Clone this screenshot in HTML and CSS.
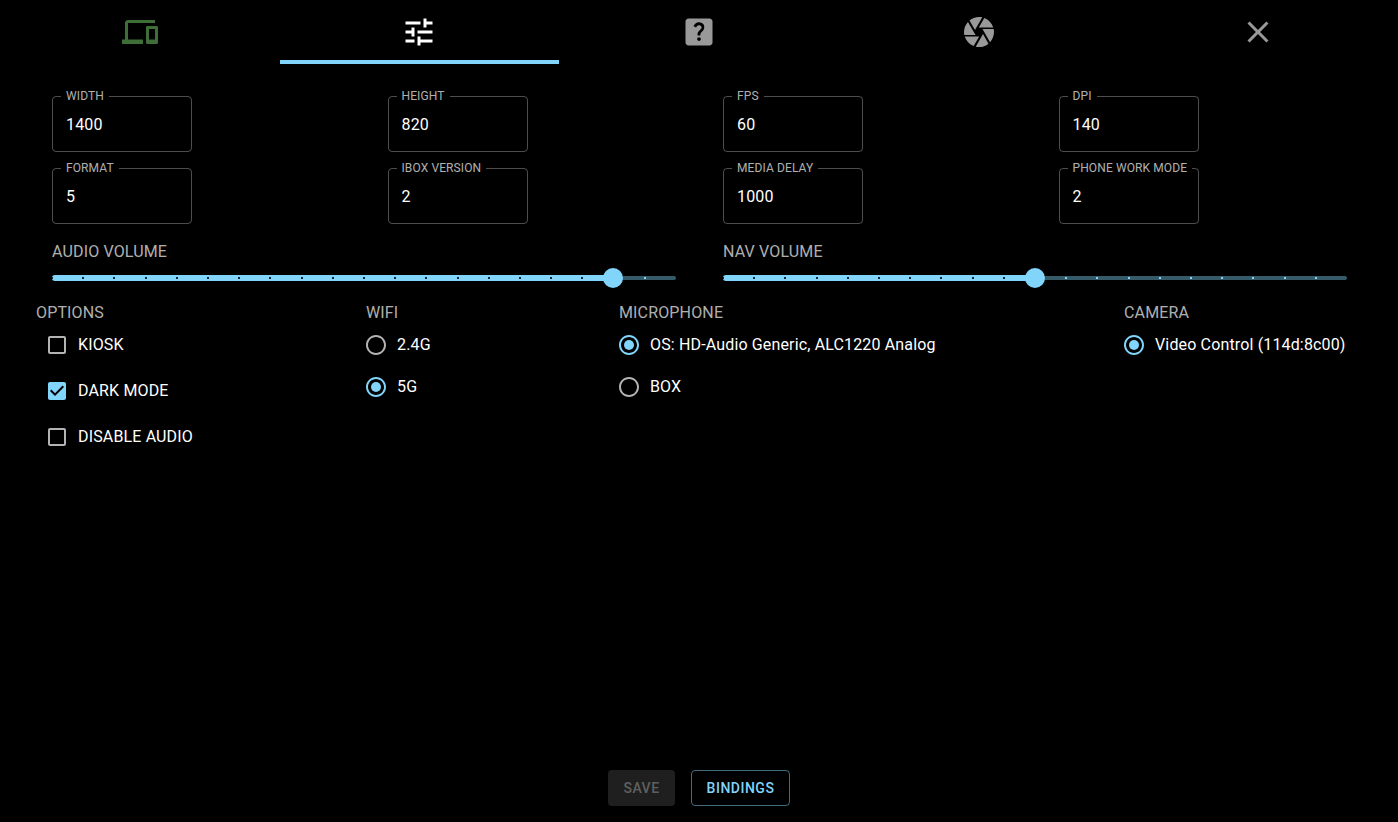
FILE: index.html
```html
<!DOCTYPE html>
<html lang="en">
<head>
    <meta charset="UTF-8">
    <title>Settings</title>
    <link rel="stylesheet" href="styles.css">
</head>
<body>
    <nav class="tabs">
        <div class="tab tab-green"><svg viewBox="0 0 24 24"><path d="M4 6h18V4H4c-1.1 0-2 .9-2 2v11H0v3h14v-3H4V6zm19 2h-6c-.55 0-1 .45-1 1v10c0 .55.45 1 1 1h6c.55 0 1-.45 1-1V9c0-.55-.45-1-1-1zm-1 9h-4v-7h4v7z"/></svg></div>
        <div class="tab tab-active"><svg viewBox="0 0 24 24"><path d="M3 17v2h6v-2H3zM3 5v2h10V5H3zm10 16v-2h8v-2h-8v-2h-2v6h2zM7 9v2H3v2h4v2h2V9H7zm14 4v-2H11v2h10zm-6-4h2V7h4V5h-4V3h-2v6z"/></svg></div>
        <div class="tab"><svg viewBox="0 0 24 24"><path d="M19 3H5c-1.1 0-2 .9-2 2v14c0 1.1.9 2 2 2h14c1.1 0 2-.9 2-2V5c0-1.1-.9-2-2-2zm-6.99 15c-.7 0-1.26-.56-1.26-1.26 0-.71.56-1.25 1.26-1.25.71 0 1.25.54 1.25 1.25-.01.69-.54 1.26-1.25 1.26zm3.01-7.4c-.76 1.11-1.48 1.46-1.89 2.2-.17.3-.23.5-.23 1.47h-1.87c0-.52-.08-1.37.33-2.1.52-.93 1.5-1.48 2.07-2.29.6-.86.26-2.46-1.44-2.46-1.11 0-1.66.84-1.89 1.54l-1.73-.73C8.84 6.82 10.14 5.5 11.99 5.5c1.53 0 2.57.7 3.1 1.57.45.74.71 2.19-.07 3.53z"/></svg></div>
        <div class="tab"><svg viewBox="0 0 24 24"><path d="M9.4 10.5l4.77-8.26C13.47 2.09 12.75 2 12 2c-2.4 0-4.6.85-6.32 2.25l3.66 6.35.06-.1zM21.54 9c-.92-2.92-3.15-5.26-6-6.34L11.88 9h9.66zm.26 1h-7.49l.29.5 4.76 8.25C21 16.97 22 14.61 22 12c0-.69-.07-1.35-.2-2zM8.54 12l-3.9-6.75C3.01 7.03 2 9.39 2 12c0 .69.07 1.35.2 2h7.49l-1.15-2zm-6.08 3c.92 2.92 3.15 5.26 6 6.34L12.12 15H2.46zm11.27 0l-3.9 6.76c.7.15 1.42.24 2.17.24 2.4 0 4.6-.85 6.32-2.25l-3.66-6.35-.93 1.6z"/></svg></div>
        <div class="tab"><svg viewBox="0 0 24 24"><path d="M19 6.41 17.59 5 12 10.59 6.41 5 5 6.41 10.59 12 5 17.59 6.41 19 12 13.41 17.59 19 19 17.59 13.41 12z"/></svg></div>
    </nav>

    <section class="fields">
        <div class="field"><label>WIDTH</label><input value="1400"></div>
        <div class="field"><label>HEIGHT</label><input value="820"></div>
        <div class="field"><label>FPS</label><input value="60"></div>
        <div class="field"><label>DPI</label><input value="140"></div>
        <div class="field"><label>FORMAT</label><input value="5"></div>
        <div class="field"><label>IBOX VERSION</label><input value="2"></div>
        <div class="field"><label>MEDIA DELAY</label><input value="1000"></div>
        <div class="field"><label>PHONE WORK MODE</label><input value="2"></div>
    </section>

    <section class="volumes">
        <div>
            <div class="heading">AUDIO VOLUME</div>
            <div class="slider">
                <div class="rail"></div>
                <div class="track" style="width: 89.9%"><div class="track-marks"></div></div>
                <div class="thumb" style="left: 89.9%"></div>
            </div>
        </div>
        <div>
            <div class="heading">NAV VOLUME</div>
            <div class="slider">
                <div class="rail"></div>
                <div class="track" style="width: 50%"><div class="track-marks"></div></div>
                <div class="thumb" style="left: 50%"></div>
            </div>
        </div>
    </section>

    <section class="options">
        <div class="group">
            <div class="heading">OPTIONS</div>
            <div class="check-row">
                <svg class="control" viewBox="0 0 24 24"><path d="M19 5v14H5V5h14m0-2H5c-1.1 0-2 .9-2 2v14c0 1.1.9 2 2 2h14c1.1 0 2-.9 2-2V5c0-1.1-.9-2-2-2z"/></svg>
                <span>KIOSK</span>
            </div>
            <div class="check-row">
                <svg class="control on" viewBox="0 0 24 24"><path d="M19 3H5c-1.11 0-2 .9-2 2v14c0 1.1.89 2 2 2h14c1.11 0 2-.9 2-2V5c0-1.1-.89-2-2-2zm-9 14l-5-5 1.41-1.41L10 14.17l7.59-7.59L19 8l-9 9z"/></svg>
                <span>DARK MODE</span>
            </div>
            <div class="check-row">
                <svg class="control" viewBox="0 0 24 24"><path d="M19 5v14H5V5h14m0-2H5c-1.1 0-2 .9-2 2v14c0 1.1.9 2 2 2h14c1.1 0 2-.9 2-2V5c0-1.1-.9-2-2-2z"/></svg>
                <span>DISABLE AUDIO</span>
            </div>
        </div>
        <div class="group">
            <div class="heading">WIFI</div>
            <div class="radio-row">
                <svg class="control" viewBox="0 0 24 24"><path d="M12 2C6.48 2 2 6.48 2 12s4.48 10 10 10 10-4.48 10-10S17.52 2 12 2zm0 18c-4.42 0-8-3.58-8-8s3.58-8 8-8 8 3.58 8 8-3.58 8-8 8z"/></svg>
                <span>2.4G</span>
            </div>
            <div class="radio-row">
                <svg class="control on" viewBox="0 0 24 24"><path d="M12 2C6.48 2 2 6.48 2 12s4.48 10 10 10 10-4.48 10-10S17.52 2 12 2zm0 18c-4.42 0-8-3.58-8-8s3.58-8 8-8 8 3.58 8 8-3.58 8-8 8z"/><circle cx="12" cy="12" r="5"/></svg>
                <span>5G</span>
            </div>
        </div>
        <div class="group">
            <div class="heading">MICROPHONE</div>
            <div class="radio-row">
                <svg class="control on" viewBox="0 0 24 24"><path d="M12 2C6.48 2 2 6.48 2 12s4.48 10 10 10 10-4.48 10-10S17.52 2 12 2zm0 18c-4.42 0-8-3.58-8-8s3.58-8 8-8 8 3.58 8 8-3.58 8-8 8z"/><circle cx="12" cy="12" r="5"/></svg>
                <span>OS: HD-Audio Generic, ALC1220 Analog</span>
            </div>
            <div class="radio-row">
                <svg class="control" viewBox="0 0 24 24"><path d="M12 2C6.48 2 2 6.48 2 12s4.48 10 10 10 10-4.48 10-10S17.52 2 12 2zm0 18c-4.42 0-8-3.58-8-8s3.58-8 8-8 8 3.58 8 8-3.58 8-8 8z"/></svg>
                <span>BOX</span>
            </div>
        </div>
        <div class="group">
            <div class="heading">CAMERA</div>
            <div class="radio-row">
                <svg class="control on" viewBox="0 0 24 24"><path d="M12 2C6.48 2 2 6.48 2 12s4.48 10 10 10 10-4.48 10-10S17.52 2 12 2zm0 18c-4.42 0-8-3.58-8-8s3.58-8 8-8 8 3.58 8 8-3.58 8-8 8z"/><circle cx="12" cy="12" r="5"/></svg>
                <span>Video Control (114d:8c00)</span>
            </div>
        </div>
    </section>

    <footer class="actions">
        <button class="btn btn-disabled" disabled>SAVE</button>
        <button class="btn btn-outlined">BINDINGS</button>
    </footer>
</body>
</html>
```

FILE: styles.css
```css
html, body {
    height: 100%;
}
body {
    margin: 0;
    display: flex;
    flex-direction: column;
    box-sizing: border-box;
    background-color: #000;
    color: #fff;
    font-family: Roboto, "Liberation Sans", sans-serif;
    font-size: 16px;
    line-height: 24px;
    letter-spacing: 0.15px;
}

/* tabs */
.tabs {
    display: grid;
    grid-template-columns: repeat(5, 1fr);
    height: 64px;
}
.tab {
    display: flex;
    align-items: center;
    justify-content: center;
    box-sizing: border-box;
    height: 64px;
    color: #999;
}
.tab svg {
    width: 36px;
    height: 36px;
    fill: currentColor;
}
.tab-green {
    color: #3f6e38;
}
.tab-active {
    color: #fff;
    border-bottom: 4px solid #81d4fa;
}
.tab-active svg {
    margin-top: 4px;
}

/* number fields */
.fields {
    display: grid;
    grid-template-columns: repeat(4, 1fr);
    row-gap: 16px;
    padding: 32px 4px 0 52px;
}
.field {
    position: relative;
    box-sizing: border-box;
    width: 140px;
    height: 56px;
    border: 1px solid rgba(255, 255, 255, 0.3);
    border-radius: 4px;
}
.field label {
    position: absolute;
    top: -8px;
    left: 8px;
    padding: 0 5px;
    background-color: #000;
    color: rgba(255, 255, 255, 0.7);
    font-size: 12px;
    line-height: 14px;
    letter-spacing: 0.11px;
    white-space: nowrap;
}
.field input {
    width: 100%;
    height: 100%;
    box-sizing: border-box;
    padding: 0 13px;
    border: none;
    outline: none;
    background: transparent;
    color: #fff;
    font: inherit;
    letter-spacing: inherit;
}

.heading {
    color: rgba(255, 255, 255, 0.7);
}

/* sliders */
.volumes {
    display: grid;
    grid-template-columns: 1fr 1fr;
    column-gap: 47px;
    margin-top: 16px;
    padding: 0 51px 0 52px;
}
.slider {
    position: relative;
    height: 28px;
}
.rail, .track, .track-marks {
    position: absolute;
    top: 11px;
    left: 0;
    height: 6px;
}
.rail {
    top: 12px;
    width: 100%;
    height: 4px;
    border-radius: 2px;
    background:
        repeating-linear-gradient(90deg, #81d4fa 0 2px, transparent 2px 31.2px) -1px 1px / 100% 2px no-repeat,
        #355a68;
}
.track {
    overflow: hidden;
    border-radius: 3px;
    background-color: #81d4fa;
}
.track-marks {
    top: 2px;
    left: -1px;
    width: 700px;
    height: 2px;
    background: repeating-linear-gradient(90deg, #0d2530 0 2px, transparent 2px 31.2px);
}
.thumb {
    position: absolute;
    top: 4px;
    width: 20px;
    height: 20px;
    margin-left: -10px;
    border-radius: 50%;
    background-color: #81d4fa;
}

/* options */
.options {
    display: grid;
    grid-template-columns: 330px 253px 505px auto;
    margin-top: 9px;
    padding-left: 36px;
}
.check-row, .radio-row {
    display: flex;
    align-items: center;
    gap: 9px;
    white-space: nowrap;
}
.check-row {
    height: 46px;
    margin-left: 9px;
}
.heading + .check-row {
    margin-top: -3px;
}
.radio-row {
    height: 42px;
    margin-left: -2px;
}
.heading + .radio-row {
    margin-top: -1px;
}
.control {
    flex: none;
    width: 24px;
    height: 24px;
    fill: rgba(255, 255, 255, 0.7);
}
.control.on {
    fill: #81d4fa;
}

/* bottom buttons */
.actions {
    display: flex;
    justify-content: center;
    gap: 16px;
    margin-top: auto;
    padding-bottom: 16px;
}
.btn {
    box-sizing: border-box;
    height: 36px;
    border-radius: 4px;
    font-family: inherit;
    font-size: 14px;
    font-weight: 500;
    letter-spacing: 0.5px;
}
.btn-disabled {
    width: 67px;
    border: none;
    background-color: rgba(255, 255, 255, 0.12);
    color: rgba(255, 255, 255, 0.3);
}
.btn-outlined {
    width: 99px;
    border: 1px solid rgba(129, 212, 250, 0.5);
    background: transparent;
    color: #81d4fa;
}
```
